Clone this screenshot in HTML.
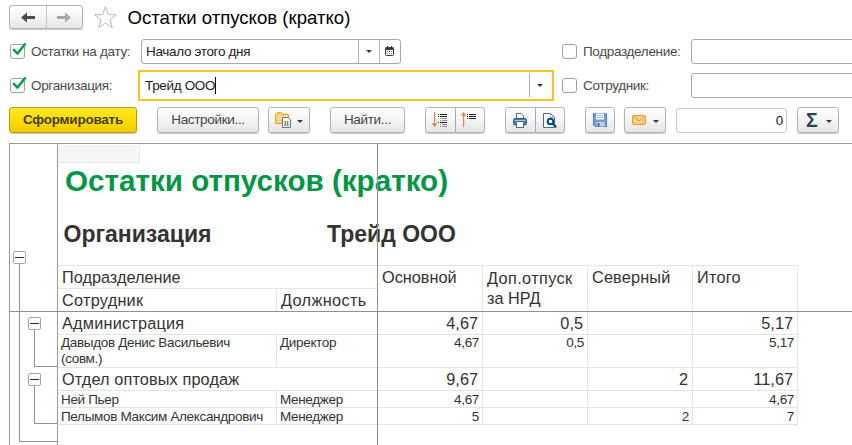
<!DOCTYPE html>
<html lang="ru">
<head>
<meta charset="utf-8">
<title>Остатки отпусков (кратко)</title>
<style>
html,body{margin:0;padding:0;background:#fff;}
body{width:852px;height:445px;position:relative;overflow:hidden;font-family:"Liberation Sans",sans-serif;color:#333;font-size:13px;}
.abs{position:absolute;}
.btn{position:absolute;box-sizing:border-box;border:1px solid #b4b4b4;border-radius:3px;background:linear-gradient(#ffffff,#f4f4f4 50%,#e6e6e6);box-shadow:0 1px 1px rgba(0,0,0,.22);height:26px;top:107px;text-align:center;line-height:24px;font-size:13.5px;letter-spacing:-0.33px;color:#444;white-space:nowrap;}
.ybtn{border-color:#b89e00;background:linear-gradient(#ffe92e,#fddc00 50%,#f2cc00);font-weight:bold;color:#453c10;letter-spacing:-0.23px;}
.sep{position:absolute;top:0;bottom:0;width:1px;background:#c6c6c6;}
.inp{position:absolute;box-sizing:border-box;border:1px solid #a9a9a9;border-radius:3px;background:#fff;height:25px;line-height:23px;font-size:13.5px;letter-spacing:-0.33px;color:#222;white-space:nowrap;}
.lbl{position:absolute;font-size:13.5px;letter-spacing:-0.33px;color:#4b4b4b;white-space:nowrap;line-height:15px;}
.cb{position:absolute;box-sizing:border-box;width:15px;height:15px;border:1px solid #a0a0a0;border-radius:3px;background:#fff;}
.tri{position:absolute;width:0;height:0;border-left:3px solid transparent;border-right:3px solid transparent;border-top:3px solid #3a3a3a;}
.hl{position:absolute;height:1px;background:#e4e4e4;}
.vl{position:absolute;width:1px;background:#e4e4e4;}
.dl{position:absolute;background:#929292;}
.t16{position:absolute;font-size:16.3px;line-height:19px;white-space:nowrap;color:#333;}
.t13{position:absolute;font-size:13.5px;letter-spacing:-0.33px;line-height:16px;white-space:nowrap;color:#333;}
.r{text-align:right;}
.tg{position:absolute;box-sizing:border-box;width:13px;height:13px;border:1px solid #a6a6a6;border-radius:2px;background:#fff;}
.tg:after{content:"";position:absolute;left:1px;right:1px;top:5px;height:1px;background:#2a2a2a;}
</style>
</head>
<body>

<!-- nav buttons -->
<div class="btn" style="left:9px;top:5px;width:74px;height:24px;">
  <div class="sep" style="left:36px;"></div>
  <svg class="abs" style="left:10px;top:5px" width="16" height="13" viewBox="0 0 16 13"><path d="M1 6.5 L7 1.5 V5 H15 V8 H7 V11.5 Z" fill="#4a4a4a"/></svg>
  <svg class="abs" style="left:46px;top:5px" width="16" height="13" viewBox="0 0 16 13"><path d="M15 6.5 L9 1.5 V5 H1 V8 H9 V11.5 Z" fill="#a8a8a8"/></svg>
</div>
<!-- star -->
<svg class="abs" style="left:93px;top:5px" width="25" height="24" viewBox="0 0 25 24"><path d="M12.5 1.8 L15.3 9.6 L23.4 9.8 L17 14.8 L19.3 22.6 L12.5 18 L5.7 22.6 L8 14.8 L1.6 9.8 L9.7 9.6 Z" fill="#fff" stroke="#b3bac2" stroke-width="1"/></svg>
<div class="abs" style="left:127.5px;top:7px;font-size:18.6px;line-height:22px;color:#000;white-space:nowrap;">Остатки отпусков (кратко)</div>

<!-- row 1 -->
<div class="cb" style="left:10px;top:44px;"></div>
<svg class="abs" style="left:11px;top:42px" width="16" height="16" viewBox="0 0 16 16"><path d="M2.9 7.9 L6.5 11.6 L13.9 2.2" fill="none" stroke="#0a9b48" stroke-width="2.5" stroke-linecap="round" stroke-linejoin="round"/></svg>
<div class="lbl" style="left:31px;top:44px;">Остатки на дату:</div>
<div class="inp" style="left:141px;top:39px;width:260px;">
  <span class="abs" style="left:4px;top:0;">Начало этого дня</span>
  <div class="sep" style="left:216px;background:#b8b8b8"></div>
  <div class="tri" style="left:224px;top:10px;"></div>
  <div class="sep" style="left:237px;background:#b8b8b8"></div>
  <svg class="abs" style="left:243px;top:6px" width="9" height="10" viewBox="0 0 9 10"><rect x="0.5" y="1.5" width="8" height="8" rx="1" fill="#fff" stroke="#3a3a3a"/><rect x="0.5" y="1.5" width="8" height="2.5" fill="#3a3a3a"/><rect x="2" y="0" width="1" height="2" fill="#3a3a3a"/><rect x="6" y="0" width="1" height="2" fill="#3a3a3a"/><g fill="#4a4a4a"><rect x="1.8" y="5" width="1" height="1"/><rect x="4" y="5" width="1" height="1"/><rect x="6.2" y="5" width="1" height="1"/><rect x="1.8" y="7.2" width="1" height="1"/><rect x="4" y="7.2" width="1" height="1"/><rect x="6.2" y="7.2" width="1" height="1"/></g></svg>
</div>
<div class="cb" style="left:562px;top:44px;"></div>
<div class="lbl" style="left:583px;top:44px;">Подразделение:</div>
<div class="inp" style="left:691px;top:39px;width:180px;"></div>

<!-- row 2 -->
<div class="cb" style="left:10px;top:78px;"></div>
<svg class="abs" style="left:11px;top:76px" width="16" height="16" viewBox="0 0 16 16"><path d="M2.9 7.9 L6.5 11.6 L13.9 2.2" fill="none" stroke="#0a9b48" stroke-width="2.5" stroke-linecap="round" stroke-linejoin="round"/></svg>
<div class="lbl" style="left:31px;top:78px;">Организация:</div>
<div class="inp" style="left:138px;top:70px;width:416px;height:31px;border:2px solid #fbc424;border-radius:0;">
  <span class="abs" style="left:5px;top:2px;">Трейд ООО</span>
  <div class="abs" style="left:75px;top:5px;width:1px;height:17px;background:#000;"></div>
  <div class="sep" style="left:389px;top:2px;bottom:2px;background:#b0b0b0"></div>
  <div class="tri" style="left:397px;top:12px;"></div>
</div>
<div class="cb" style="left:562px;top:78px;"></div>
<div class="lbl" style="left:583px;top:78px;">Сотрудник:</div>
<div class="inp" style="left:691px;top:73px;width:180px;"></div>

<!-- toolbar -->
<div class="btn ybtn" style="left:9px;width:128px;">Сформировать</div>
<div class="btn" style="left:157px;width:102px;">Настройки...</div>
<div class="btn" style="left:268px;width:42px;">
  <svg class="abs" style="left:5px;top:3px" width="20" height="19" viewBox="0 0 20 19">
    <path d="M1.5 3.5 Q1.5 2.5 2.5 2.5 L4 1.5 H7 L8.5 3 H13.5 Q14.5 3 14.5 4 V12.5 H1.5 Z" fill="#f3cf6d" stroke="#d9a23a" stroke-width="1"/>
    <path d="M2.5 5.5 H13.5 M2.5 8 H13.5 M2.5 10.5 H13.5" stroke="#fbe9a8" stroke-width="1"/>
    <path d="M8.5 6.5 H14 L16.5 9 V16.5 H8.5 Z" fill="#fff" stroke="#5f7890" stroke-width="1" stroke-linejoin="round"/>
    <rect x="10.7" y="10" width="1.4" height="4" fill="#e8443a"/><rect x="13" y="10" width="1.4" height="4" fill="#3fae4a"/>
    <rect x="10" y="14" width="5" height="0.8" fill="#8a8a8a"/>
  </svg>
  <div class="tri" style="left:28px;top:12px;"></div></div>
<div class="btn" style="left:330px;width:75px;">Найти...</div>
<div class="btn" style="left:425px;width:60px;"><div class="sep" style="left:29px;background:#a8a8a8"></div>
  <svg class="abs" style="left:5px;top:3px" width="20" height="18" viewBox="0 0 20 18" shape-rendering="geometricPrecision">
    <rect x="3" y="1" width="1.2" height="14" fill="#f08040"/><path d="M0.9 12.3 H6.3 L3.6 16.2 Z" fill="#f08040"/>
    <g fill="#1e1e1e"><rect x="7" y="3" width="1" height="1"/><rect x="9" y="3" width="7" height="1"/><rect x="7" y="5" width="1" height="1"/><rect x="9" y="5" width="7" height="1"/><rect x="7" y="11" width="1" height="1"/><rect x="9" y="11" width="7" height="1"/></g>
    <g fill="#8a8a8a"><rect x="9" y="7" width="1" height="1"/><rect x="11" y="7" width="5" height="1"/><rect x="9" y="9" width="1" height="1"/><rect x="11" y="9" width="5" height="1"/><rect x="9" y="13" width="1" height="1"/><rect x="11" y="13" width="5" height="1"/><rect x="9" y="15" width="1" height="1"/><rect x="11" y="15" width="5" height="1"/></g>
  </svg>
  <svg class="abs" style="left:34px;top:3px" width="20" height="18" viewBox="0 0 20 18">
    <rect x="3" y="2" width="1.2" height="14" fill="#f08040"/><path d="M0.9 4.7 H6.3 L3.6 0.8 Z" fill="#f08040"/>
    <g fill="#1e1e1e"><rect x="7" y="3" width="1" height="1"/><rect x="9" y="3" width="7" height="1"/><rect x="7" y="5" width="1" height="1"/><rect x="9" y="5" width="7" height="1"/><rect x="7" y="7" width="1" height="1"/><rect x="9" y="7" width="7" height="1"/></g>
  </svg>
</div>
<div class="btn" style="left:505px;width:60px;"><div class="sep" style="left:29px;background:#a8a8a8"></div>
  <svg class="abs" style="left:6px;top:4px" width="18" height="17" viewBox="0 0 18 17">
    <path d="M4.5 6 V1.5 H9 L11.5 4 V6" fill="#fff" stroke="#4a6a8c" stroke-width="1"/>
    <rect x="1.5" y="6.5" width="13" height="6.5" rx="1.8" fill="#4f7dad" stroke="#355c88" stroke-width="1"/>
    <rect x="3" y="8" width="10" height="1" fill="#a9c6e2"/>
    <rect x="4.5" y="9.5" width="7" height="6" fill="#fff" stroke="#4a6a8c" stroke-width="1"/>
  </svg>
  <svg class="abs" style="left:36px;top:4px" width="18" height="17" viewBox="0 0 18 17">
    <path d="M1.5 1.5 H8.5 L12.5 5.5 V15.5 H1.5 Z" fill="#fff" stroke="#4a6a8c" stroke-width="1" stroke-linejoin="round"/>
    <path d="M8.5 1.5 V5.5 H12.5" fill="none" stroke="#9ab0c6" stroke-width="1"/>
    <circle cx="8.5" cy="9.5" r="2.8" fill="#fff" stroke="#0b4a78" stroke-width="2"/>
    <path d="M10.8 11.8 L13.6 14.6" stroke="#0b4a78" stroke-width="2.2" stroke-linecap="round"/>
  </svg>
</div>
<div class="btn" style="left:585px;width:30px;">
  <svg class="abs" style="left:7px;top:5px" width="14" height="14" viewBox="0 0 14 14">
    <path d="M1 0.5 H12.5 Q13.5 0.5 13.5 1 V13.5 H2 L0.5 12 V1 Q0.5 0.5 1 0.5 Z" fill="#6f9edb" stroke="#4d7fc4" stroke-width="1"/>
    <rect x="3" y="0.5" width="8" height="6" fill="#fff"/>
    <rect x="4" y="2" width="6" height="1" fill="#9bbbe6"/><rect x="4" y="4" width="6" height="1" fill="#9bbbe6"/>
    <rect x="3.5" y="9" width="8" height="4.5" fill="#c9cfd4"/><rect x="4.5" y="10" width="2" height="3.5" fill="#3f6fb0"/>
  </svg>
</div>
<div class="btn" style="left:624px;width:42px;">
  <svg class="abs" style="left:7px;top:7px" width="14" height="10" viewBox="0 0 14 10">
    <rect x="0.5" y="0.5" width="13" height="9" rx="1.2" fill="#f8d088" stroke="#e09a30" stroke-width="1"/>
    <path d="M1 1 L7 6 L13 1" fill="none" stroke="#e09a30" stroke-width="1"/>
    <path d="M1 9 L5 5 M13 9 L9 5" fill="none" stroke="#eab050" stroke-width="0.8"/>
  </svg>
  <div class="tri" style="left:28px;top:12px;"></div></div>
<div class="inp r" style="left:676px;top:108px;width:111px;border-color:#c8c8c8;"><span class="abs" style="right:3px;top:0;">0</span></div>
<div class="btn" style="left:797px;width:42px;"><span class="abs" style="left:8px;top:1px;font-size:19.5px;font-weight:bold;color:#2c4256;line-height:23px;">Σ</span><div class="tri" style="left:28px;top:12px;"></div></div>

<!-- spreadsheet frame -->
<div class="dl" style="left:9px;top:143px;width:843px;height:1px;background:#9a9a9a;"></div>
<div class="dl" style="left:9px;top:143px;width:1px;height:302px;background:#9a9a9a;"></div>
<div class="dl" style="left:57px;top:144px;width:1px;height:301px;background:#9a9a9a;"></div>
<div class="abs" style="left:58px;top:145px;width:81px;height:17px;background:#f6f6f6;border-right:1px solid #ececec;border-bottom:1px solid #e6e6e6;"></div>

<!-- titles -->
<div class="abs" style="left:65px;top:164px;font-size:29.6px;line-height:34px;font-weight:bold;color:#009646;white-space:nowrap;">Остатки отпусков (кратко)</div>
<div class="abs" style="left:63.5px;top:221px;font-size:23px;line-height:26px;font-weight:bold;color:#333;white-space:nowrap;">Организация</div>
<div class="abs" style="left:327px;top:221px;font-size:23px;line-height:26px;font-weight:bold;color:#333;white-space:nowrap;">Трейд ООО</div>

<!-- grid light lines -->
<div class="hl" style="left:58px;top:265px;width:740px;"></div>
<div class="hl" style="left:58px;top:288px;width:320px;"></div>
<div class="hl" style="left:58px;top:334px;width:740px;"></div>
<div class="hl" style="left:58px;top:367px;width:740px;"></div>
<div class="hl" style="left:58px;top:390px;width:740px;"></div>
<div class="hl" style="left:58px;top:407px;width:740px;"></div>
<div class="hl" style="left:58px;top:424px;width:740px;"></div>
<div class="vl" style="left:276px;top:288px;height:23px;"></div>
<div class="vl" style="left:276px;top:334px;height:33px;"></div>
<div class="vl" style="left:276px;top:390px;height:34px;"></div>
<div class="vl" style="left:482px;top:265px;height:159px;"></div>
<div class="vl" style="left:587px;top:265px;height:159px;"></div>
<div class="vl" style="left:692px;top:265px;height:159px;"></div>
<div class="vl" style="left:797px;top:265px;height:159px;"></div>

<!-- freeze lines -->
<div class="dl" style="left:377px;top:144px;width:1px;height:301px;"></div>
<div class="dl" style="left:9px;top:311px;width:843px;height:1px;"></div>

<!-- header text -->
<div class="t16" style="left:62px;top:268px;">Подразделение</div>
<div class="t16" style="left:62px;top:291px;letter-spacing:0.25px;">Сотрудник</div>
<div class="t16" style="left:281px;top:291px;letter-spacing:0.35px;">Должность</div>
<div class="t16" style="left:382px;top:268px;">Основной</div>
<div class="t16" style="left:487px;line-height:20px;top:268px;"><span style="letter-spacing:0.37px">Доп.отпуск</span><br>за НРД</div>
<div class="t16" style="left:592px;top:268px;letter-spacing:0.15px;">Северный</div>
<div class="t16" style="left:697px;top:268px;letter-spacing:0.2px;">Итого</div>

<!-- rows -->
<div class="t16" style="left:62px;top:314px;letter-spacing:0.2px;">Администрация</div>
<div class="t16 r" style="left:378px;width:100px;top:314px;">4,67</div>
<div class="t16 r" style="left:483px;width:100px;top:314px;">0,5</div>
<div class="t16 r" style="left:693px;width:100px;top:314px;">5,17</div>

<div class="t13" style="left:61px;top:335px;">Давыдов Денис Васильевич<br>(совм.)</div>
<div class="t13" style="left:280px;top:335px;">Директор</div>
<div class="t13 r" style="left:378px;width:101px;top:335px;">4,67</div>
<div class="t13 r" style="left:483px;width:101px;top:335px;">0,5</div>
<div class="t13 r" style="left:693px;width:101px;top:335px;">5,17</div>

<div class="t16" style="left:62px;top:370px;letter-spacing:0.12px;">Отдел оптовых продаж</div>
<div class="t16 r" style="left:378px;width:100px;top:370px;">9,67</div>
<div class="t16 r" style="left:588px;width:100px;top:370px;">2</div>
<div class="t16 r" style="left:693px;width:100px;top:370px;">11,67</div>

<div class="t13" style="left:61px;top:391.5px;">Ней Пьер</div>
<div class="t13" style="left:280px;top:391.5px;">Менеджер</div>
<div class="t13 r" style="left:378px;width:101px;top:391.5px;">4,67</div>
<div class="t13 r" style="left:693px;width:101px;top:391.5px;">4,67</div>

<div class="t13" style="left:61px;top:408.5px;">Пелымов Максим Александрович</div>
<div class="t13" style="left:280px;top:408.5px;">Менеджер</div>
<div class="t13 r" style="left:378px;width:101px;top:408.5px;">5</div>
<div class="t13 r" style="left:588px;width:101px;top:408.5px;">2</div>
<div class="t13 r" style="left:693px;width:101px;top:408.5px;">7</div>

<!-- group tree -->
<div class="dl" style="left:19px;top:264px;width:1px;height:178px;"></div>
<div class="dl" style="left:19px;top:441px;width:38px;height:1px;"></div>
<div class="tg" style="left:13px;top:251px;"></div>
<div class="dl" style="left:34px;top:330px;width:1px;height:37px;"></div>
<div class="dl" style="left:34px;top:366px;width:23px;height:1px;"></div>
<div class="tg" style="left:28px;top:317px;"></div>
<div class="dl" style="left:34px;top:386px;width:1px;height:38px;"></div>
<div class="dl" style="left:34px;top:423px;width:23px;height:1px;"></div>
<div class="tg" style="left:28px;top:373px;"></div>

</body>
</html>
